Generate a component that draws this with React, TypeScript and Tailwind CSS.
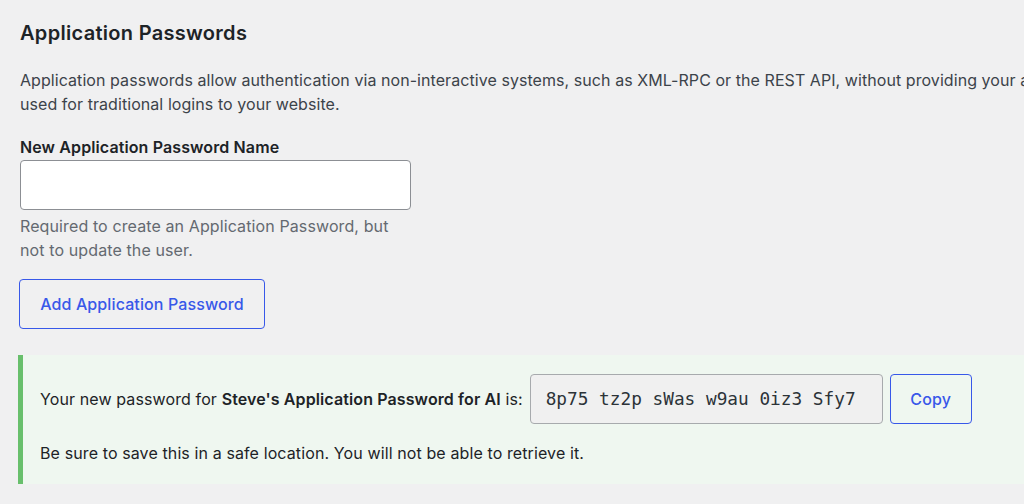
import { useState } from 'react';

/* ------------------------------------------------------------------ */
/*  Application Passwords section                                      */
/* ------------------------------------------------------------------ */

const sans = 'font-["Inter","Noto_Sans",sans-serif]';

export default function App() {
  const [name, setName] = useState('');
  const password = '8p75 tz2p sWas w9au 0iz3 Sfy7';

  return (
    <div className={`w-[1024px] h-[504px] overflow-hidden bg-[#f0f0f1] tracking-[0.007em] ${sans}`}>
      <div className="w-[1200px] pl-[20px] pt-[19px]">
        {/* ── Title ─────────────────────────────────────────── */}
        <h2 className="text-[20px] leading-[28px] font-semibold tracking-[0.015em] text-[#1d2327]">
          Application Passwords
        </h2>

        <p className="mt-[21px] text-[16px] leading-[24px] tracking-[0.004em] text-[#3c434a] whitespace-nowrap">
          Application passwords allow authentication via non-interactive systems, such as XML-RPC or the REST API, without providing your actual password. Application passwords can be easily revoked. They cannot be
          <br />
          used for traditional logins to your website.
        </p>

        {/* ── New password form ─────────────────────────────── */}
        <label
          htmlFor="new-app-pass"
          className="block mt-[19px] text-[16px] leading-[24px] font-semibold text-[#1d2327]"
        >
          New Application Password Name
        </label>
        <input
          id="new-app-pass"
          value={name}
          onChange={(e) => setName(e.target.value)}
          className="block mt-[1px] w-[391px] h-[50px] rounded-[4px] border border-[#8c8f94] bg-white px-3 text-[16px] outline-none"
        />
        <p className="mt-[4px] w-[391px] text-[16px] leading-[24px] text-[#646970]">
          Required to create an Application Password, but not to update the user.
        </p>

        <button className="mt-[17px] -ml-px h-[50px] w-[246px] rounded-[4px] border border-[#3858e9] bg-transparent text-[16px] font-medium text-[#3858e9]">
          Add Application Password
        </button>

        {/* ── Success notice ────────────────────────────────── */}
        <div className="mt-[26px] -ml-[2px] border-l-[5px] border-[#68bf6c] bg-[#eff7f0] pl-[17px] py-[19px]">
          <div className="flex items-center text-[16px] text-[#1d2327]">
            <span>
              Your new password for <strong className="font-semibold">Steve's Application Password for AI</strong> is:
            </span>
            <input
              readOnly
              value={password}
              className='ml-[7px] h-[50px] w-[353px] rounded-[4px] border border-[#a7aaad] bg-[#f0f0f0] px-[15px] text-[17.75px] tracking-normal text-[#2c3338] font-["DejaVu_Sans_Mono","Liberation_Mono",monospace] outline-none'
            />
            <button className="ml-[7px] h-[50px] w-[82px] rounded-[4px] border border-[#3858e9] bg-transparent text-[16px] font-medium text-[#3858e9]">
              Copy
            </button>
          </div>
          <p className="mt-[17px] text-[16px] leading-[24px] text-[#1d2327]">
            Be sure to save this in a safe location. You will not be able to retrieve it.
          </p>
        </div>
      </div>
    </div>
  );
}
